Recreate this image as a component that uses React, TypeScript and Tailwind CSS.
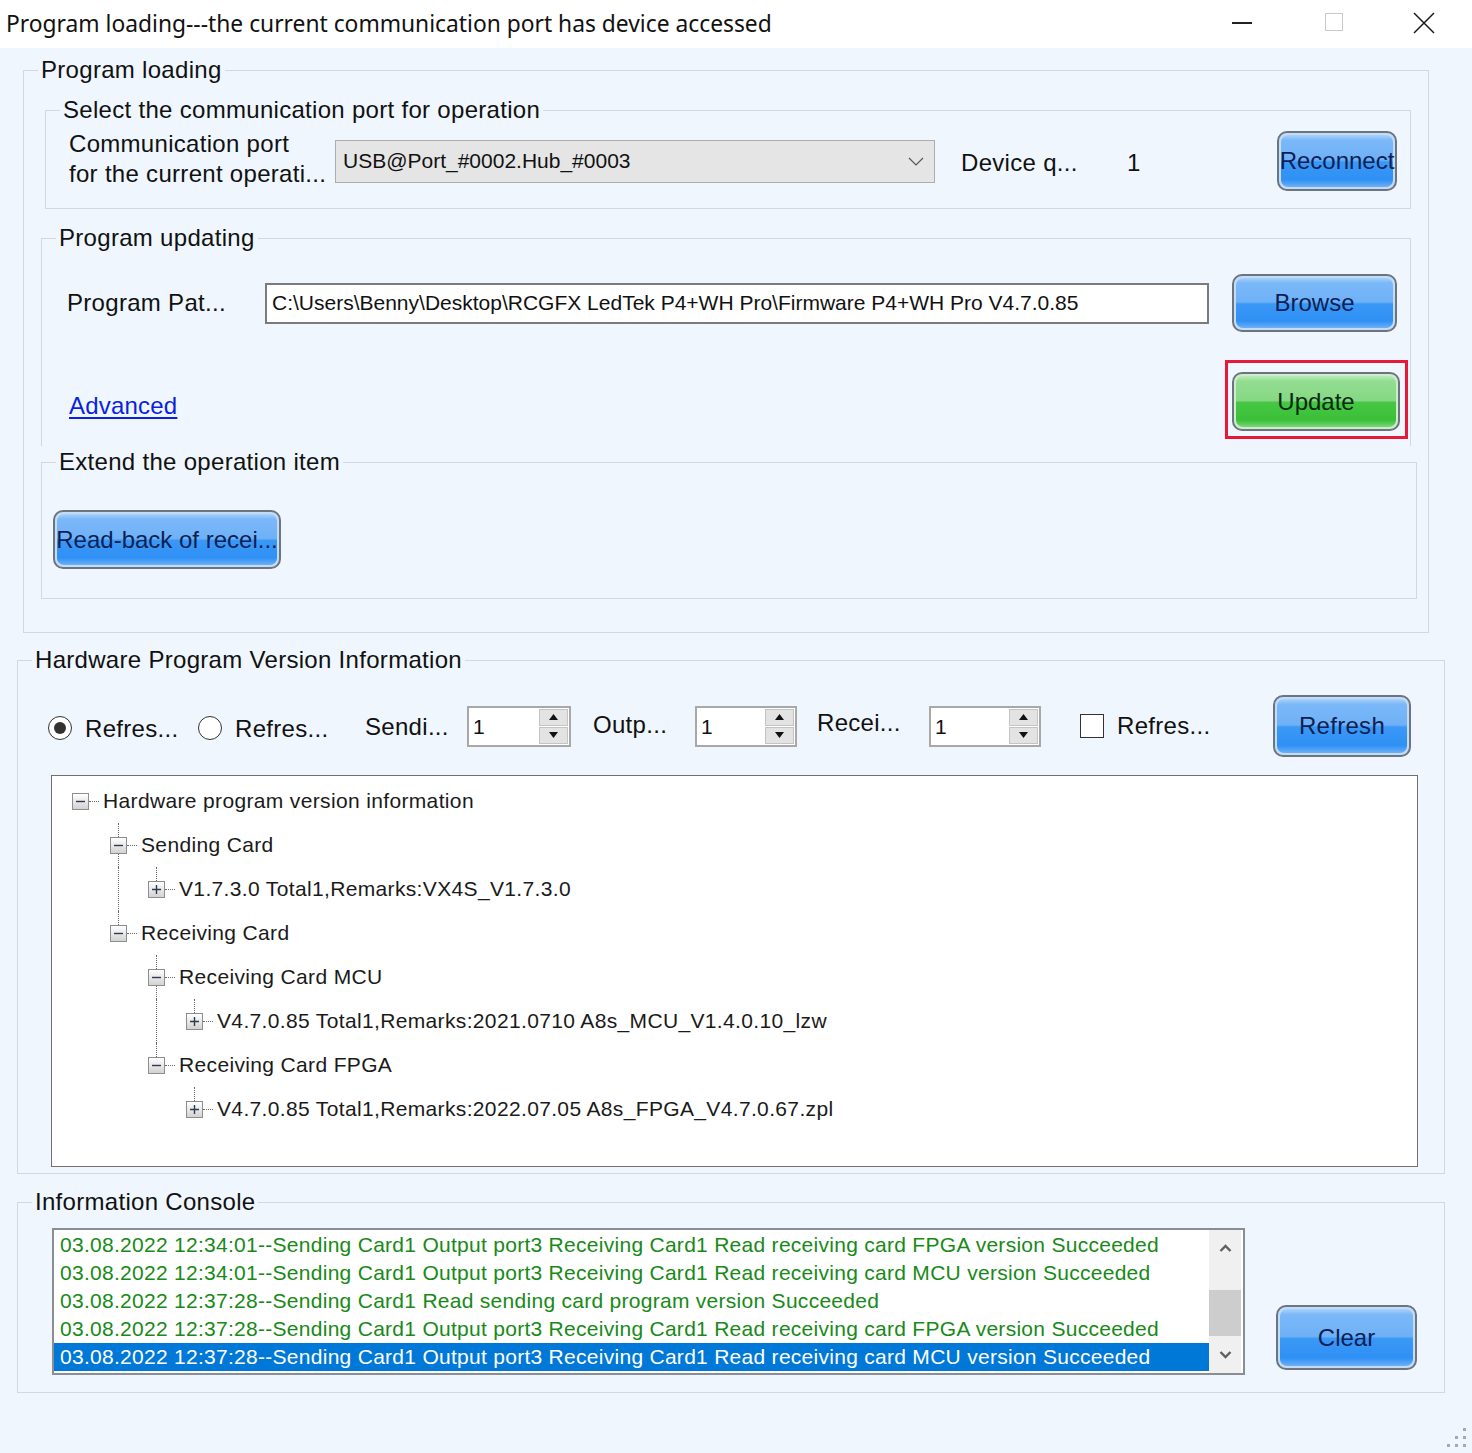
import React from 'react'

const sans = "[font-family:'Liberation_Sans',Arial,sans-serif]"

function Group({ title, className, children }: { title: string; className: string; children: React.ReactNode }) {
  return (
    <fieldset className={`shrink-0 border border-[#d1d8df] ${className}`}>
      <legend className="ml-[14px] px-[3px] text-[24px] leading-[28px] tracking-[0.3px] text-[#111]">{title}</legend>
      {children}
    </fieldset>
  )
}

function GlossButton({ label, size, green = false }: { label: string; size: string; green?: boolean }) {
  return (
    <div
      className={`${size} shrink-0 rounded-[10px] border-2 border-[#6c747f] p-[2px] ${green ? 'bg-[#cdeccb]' : 'bg-[#c3dcf5]'}`}
    >
      <div
        className={`flex h-full w-full items-center justify-center rounded-[7px] ${
          green
            ? 'bg-[linear-gradient(to_bottom,#b9eab7_0%,#93dd91_10%,#86d884_48%,#45c743_52%,#3bbf38_86%,#78d676_100%)]'
            : 'bg-[linear-gradient(to_bottom,#a9d2fb_0%,#7ab8f8_10%,#6fb1f7_48%,#3a98f6_52%,#2f90f5_86%,#6db0f6_100%)]'
        }`}
      >
        <span className={`whitespace-nowrap text-[24px] leading-none ${green ? 'text-[#0b2a12]' : 'text-[#0b1f55]'}`}>
          {label}
        </span>
      </div>
    </div>
  )
}

function TitleBar() {
  return (
    <div className="flex h-[48px] shrink-0 items-center bg-white">
      <div className="pl-[6px] text-[22.8px] text-[#111] [font-family:'Noto_Sans',sans-serif]">
        Program loading---the current communication port has device accessed
      </div>
      <div className="ml-auto flex h-full items-center">
        <div className="flex h-full w-[92px] items-center justify-center">
          <div className="mt-[-2px] h-[1.5px] w-[20px] bg-[#222]" />
        </div>
        <div className="flex h-full w-[92px] items-center justify-center">
          <div className="mt-[-4px] h-[18px] w-[18px] border border-[#c8c8c8]" />
        </div>
        <div className="flex h-full w-[92px] items-center justify-center pr-[4px]">
          <svg width="22" height="22" viewBox="0 0 22 22" className="mt-[-2px]">
            <path d="M1 1L21 21M21 1L1 21" stroke="#1a1a1a" strokeWidth="1.5" />
          </svg>
        </div>
      </div>
    </div>
  )
}

function Spin({ w }: { w: string }) {
  return (
    <div className={`${w} flex h-[41px] shrink-0 border-2 border-[#a8a8a8] bg-white`}>
      <div className="flex-1 pl-[4px] text-[21px] leading-[37px] text-[#111]">1</div>
      <div className="my-[1px] mr-[1px] flex w-[29px] flex-col gap-[1px]">
        <div className="flex flex-1 items-center justify-center border border-[#c4c4c4] bg-[#e3e3e3]">
          <svg width="9" height="6" viewBox="0 0 9 6">
            <path d="M0 6L4.5 0L9 6Z" fill="#111" />
          </svg>
        </div>
        <div className="flex flex-1 items-center justify-center border border-[#c4c4c4] bg-[#e3e3e3]">
          <svg width="9" height="6" viewBox="0 0 9 6">
            <path d="M0 0L4.5 6L9 0Z" fill="#111" />
          </svg>
        </div>
      </div>
    </div>
  )
}

type Guide = 'none' | 'pass'
type Row = { level: number; text: string; sign: 'minus' | 'plus'; guides: Guide[]; top: boolean; bottom: boolean }

const rows: Row[] = [
  { level: 0, text: 'Hardware program version information', sign: 'minus', guides: [], top: false, bottom: false },
  { level: 1, text: 'Sending Card', sign: 'minus', guides: ['none'], top: true, bottom: true },
  { level: 2, text: 'V1.7.3.0 Total1,Remarks:VX4S_V1.7.3.0', sign: 'plus', guides: ['none', 'pass'], top: true, bottom: false },
  { level: 1, text: 'Receiving Card', sign: 'minus', guides: ['none'], top: true, bottom: false },
  { level: 2, text: 'Receiving Card MCU', sign: 'minus', guides: ['none', 'none'], top: true, bottom: true },
  {
    level: 3,
    text: 'V4.7.0.85 Total1,Remarks:2021.0710 A8s_MCU_V1.4.0.10_lzw',
    sign: 'plus',
    guides: ['none', 'none', 'pass'],
    top: true,
    bottom: false,
  },
  { level: 2, text: 'Receiving Card FPGA', sign: 'minus', guides: ['none', 'none'], top: true, bottom: false },
  {
    level: 3,
    text: 'V4.7.0.85 Total1,Remarks:2022.07.05 A8s_FPGA_V4.7.0.67.zpl',
    sign: 'plus',
    guides: ['none', 'none', 'none'],
    top: true,
    bottom: false,
  },
]

function Expander({ sign }: { sign: 'minus' | 'plus' }) {
  return (
    <div className="flex h-[17px] w-[17px] items-center justify-center border border-[#8e8e8e] bg-[linear-gradient(to_bottom,#ffffff,#d2d2d2)]">
      <svg width="11" height="11" viewBox="0 0 11 11">
        <path d={sign === 'minus' ? 'M1 5.5H10' : 'M1 5.5H10M5.5 1V10'} stroke="#2d3b4f" strokeWidth="1.4" />
      </svg>
    </div>
  )
}

function Tree() {
  return (
    <div className="ml-[33px] mt-[18px] h-[392px] w-[1367px] border border-[#707070] bg-white pl-[9px] pt-[3px]">
      {rows.map((r, i) => (
        <div key={i} className="flex h-[44px] items-center">
          {r.guides.map((g, j) => (
            <div key={j} className="flex h-full w-[38px] shrink-0">
              <div className="w-[19px]" />
              {g === 'pass' && <div className="h-full w-0 border-l border-dotted border-[#6a6a6a]" />}
            </div>
          ))}
          <div className="flex h-full w-[38px] shrink-0 items-center">
            <div className="w-[11px]" />
            <div className="flex h-full w-[17px] flex-col">
              <div className={`ml-[8px] w-0 flex-1 ${r.top ? 'border-l border-dotted border-[#6a6a6a]' : ''}`} />
              <Expander sign={r.sign} />
              <div className={`ml-[8px] w-0 flex-1 ${r.bottom ? 'border-l border-dotted border-[#6a6a6a]' : ''}`} />
            </div>
            <div className="w-[10px] border-t border-dotted border-[#6a6a6a]" />
          </div>
          <span className="ml-[4px] whitespace-nowrap text-[21px] tracking-[0.35px] text-[#1a1a1a]">{r.text}</span>
        </div>
      ))}
    </div>
  )
}

const logs = [
  '03.08.2022 12:34:01--Sending Card1 Output port3 Receiving Card1 Read receiving card FPGA version Succeeded',
  '03.08.2022 12:34:01--Sending Card1 Output port3 Receiving Card1 Read receiving card MCU version Succeeded',
  '03.08.2022 12:37:28--Sending Card1 Read sending card program version Succeeded',
  '03.08.2022 12:37:28--Sending Card1 Output port3 Receiving Card1 Read receiving card FPGA version Succeeded',
  '03.08.2022 12:37:28--Sending Card1 Output port3 Receiving Card1 Read receiving card MCU version Succeeded',
]

function Console() {
  return (
    <div className="ml-[34px] flex h-[147px] w-[1193px] shrink-0 border-2 border-[#898e95] bg-white">
      <div className="flex-1 pt-[1px]">
        {logs.map((l, i) => (
          <div
            key={i}
            className={`h-[28px] whitespace-nowrap pl-[6px] text-[21px] leading-[28px] tracking-[0.28px] ${
              i === logs.length - 1 ? 'bg-[#0078d7] text-white' : 'text-[#178a17]'
            }`}
          >
            {l}
          </div>
        ))}
      </div>
      <div className="mr-[2px] flex w-[32px] flex-col bg-[#f0f0f0]">
        <div className="flex h-[36px] items-center justify-center">
          <svg width="13" height="8" viewBox="0 0 13 8">
            <path d="M1.5 7L6.5 2L11.5 7" stroke="#606060" strokeWidth="2.4" fill="none" />
          </svg>
        </div>
        <div className="h-[24px]" />
        <div className="h-[46px] bg-[#cdcdcd]" />
        <div className="flex-1" />
        <div className="flex h-[36px] items-center justify-center">
          <svg width="13" height="8" viewBox="0 0 13 8">
            <path d="M1.5 1L6.5 6L11.5 1" stroke="#606060" strokeWidth="2.4" fill="none" />
          </svg>
        </div>
      </div>
    </div>
  )
}

export default function App() {
  return (
    <div className={`flex h-[1453px] w-[1472px] flex-col overflow-hidden bg-[#eff6fd] ${sans}`}>
      <TitleBar />

      <Group title="Program loading" className="ml-[23px] mt-[8px] w-[1406px] pb-[33px]">
        <Group title="Select the communication port for operation" className="ml-[21px] mt-[12px] w-[1366px] pb-[17px] pt-[7px]">
          <div className="flex h-[60px] items-center">
            <div className="ml-[23px] mt-[-4px] w-[266px] shrink-0 text-[24px] leading-[30px] tracking-[0.3px] text-[#111]">
              <div>Communication port</div>
              <div>for the current operati...</div>
            </div>
            <div className="flex h-[43px] w-[600px] shrink-0 items-center border border-[#adadad] bg-[#e5e5e5] pl-[7px] pr-[10px]">
              <span className="text-[21px] text-[#111]">USB@Port_#0002.Hub_#0003</span>
              <svg width="16" height="9" viewBox="0 0 16 9" className="ml-auto">
                <path d="M1 1L8 8L15 1" stroke="#555" strokeWidth="1.2" fill="none" />
              </svg>
            </div>
            <span className="ml-[26px] mt-[4px] w-[166px] shrink-0 text-[24px] tracking-[0.3px] text-[#111]">Device q...</span>
            <span className="mt-[4px] text-[24px] text-[#111]">1</span>
            <div className="ml-auto mr-[13px]">
              <GlossButton label="Reconnect" size="w-[120px] h-[60px]" />
            </div>
          </div>
        </Group>

        <Group title="Program updating" className="ml-[17px] mt-[15px] w-[1370px] border-b-0 pb-[7px] pt-[22px]">
          <div className="flex h-[58px] items-center">
            <span className="ml-[25px] w-[198px] shrink-0 text-[24px] tracking-[0.3px] text-[#111]">Program Pat...</span>
            <div className="flex h-[41px] w-[944px] shrink-0 items-center border-2 border-[#7b7b7b] bg-white pl-[5px]">
              <span className="whitespace-nowrap text-[21px] text-[#111]">
                {'C:\\Users\\Benny\\Desktop\\RCGFX LedTek P4+WH Pro\\Firmware P4+WH Pro V4.7.0.85'}
              </span>
            </div>
            <div className="ml-[23px]">
              <GlossButton label="Browse" size="w-[165px] h-[58px]" />
            </div>
          </div>
          <div className="mt-[28px] flex h-[79px] items-start">
            <a className="ml-[27px] mt-[32px] text-[24px] leading-[28px] tracking-[0.2px] text-[#0b1fe0] underline underline-offset-[3px]">
              Advanced
            </a>
            <div className="ml-auto mr-[2px] border-[3px] border-[#e61a38] pb-[5px] pl-[4px] pr-[5px] pt-[9px]">
              <GlossButton label="Update" size="w-[168px] h-[59px]" green />
            </div>
          </div>
        </Group>

        <Group title="Extend the operation item" className="ml-[17px] mt-[2px] w-[1376px] pb-[29px] pt-[34px]">
          <div className="ml-[11px]">
            <GlossButton label="Read-back of recei..." size="w-[228px] h-[59px]" />
          </div>
        </Group>
      </Group>

      <Group title="Hardware Program Version Information" className="ml-[17px] mt-[13px] w-[1428px] pb-[6px] pt-[21px]">
        <div className="flex h-[62px] items-center text-[24px] tracking-[0.3px] text-[#111]">
          <div className="ml-[30px] mt-[4px] flex h-[24px] w-[24px] shrink-0 items-center justify-center rounded-full border-[1.5px] border-[#333] bg-white">
            <div className="h-[12px] w-[12px] rounded-full bg-[#333]" />
          </div>
          <span className="ml-[13px] mt-[6px] w-[113px] shrink-0">Refres...</span>
          <div className="mt-[4px] h-[24px] w-[24px] shrink-0 rounded-full border-[1.5px] border-[#333] bg-white" />
          <span className="ml-[13px] mt-[6px] w-[130px] shrink-0">Refres...</span>
          <span className="mt-[2px] w-[102px] shrink-0">Sendi...</span>
          <Spin w="w-[104px]" />
          <span className="ml-[22px] mt-[-2px] w-[102px] shrink-0">Outp...</span>
          <Spin w="w-[102px]" />
          <span className="ml-[20px] mt-[-6px] w-[112px] shrink-0">Recei...</span>
          <Spin w="w-[112px]" />
          <div className="ml-[39px] h-[24px] w-[24px] shrink-0 border-[1.5px] border-[#333] bg-white" />
          <span className="ml-[13px] w-[156px] shrink-0">Refres...</span>
          <GlossButton label="Refresh" size="w-[138px] h-[62px]" />
        </div>
        <Tree />
      </Group>

      <Group title="Information Console" className="ml-[17px] mt-[14px] w-[1428px] pb-[17px] pt-[12px]">
        <div className="flex items-start">
          <Console />
          <div className="ml-[31px] mt-[77px]">
            <GlossButton label="Clear" size="w-[141px] h-[65px]" />
          </div>
        </div>
      </Group>

      <div className="flex flex-1 items-end justify-end pb-[5px] pr-[5px]">
        <svg width="20" height="20" viewBox="0 0 20 20">
          <rect x="16" y="0" width="3" height="3" fill="#a8a8a8" />
          <rect x="8" y="8" width="3" height="3" fill="#a8a8a8" />
          <rect x="16" y="8" width="3" height="3" fill="#a8a8a8" />
          <rect x="0" y="16" width="3" height="3" fill="#a8a8a8" />
          <rect x="8" y="16" width="3" height="3" fill="#a8a8a8" />
          <rect x="16" y="16" width="3" height="3" fill="#a8a8a8" />
        </svg>
      </div>
    </div>
  )
}
